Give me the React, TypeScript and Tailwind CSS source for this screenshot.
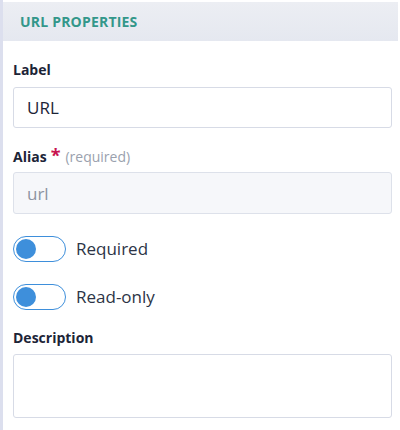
import { useState } from "react";

function Toggle({ label }: { label: string }) {
  const [on, setOn] = useState(false);
  return (
    <label className="flex h-[26px] cursor-pointer items-center gap-[10px]">
      <button
        type="button"
        onClick={() => setOn(!on)}
        className="relative h-[26px] w-[53px] rounded-full border border-[#3e8fdb] bg-white"
      >
        <span
          className={
            "absolute top-[2px] h-[20px] w-[20px] rounded-full bg-[#3e8fdb] " +
            (on ? "left-[29px]" : "left-[2px]")
          }
        />
      </button>
      <span className="text-[17px] text-[#2c3446]">{label}</span>
    </label>
  );
}

export default function App() {
  return (
    <div
      className="flex min-h-[430px] w-[400px] bg-white"
      style={{ fontFamily: '"Open Sans", "Noto Sans", sans-serif' }}
    >
      <div className="w-[3px] shrink-0 bg-[#dcdfee]" />
      <div className="flex-1 pr-[2px]">
        <div className="mt-[2px] flex h-[39px] items-center bg-gradient-to-b from-[#eceef3] to-[#e5e8f0] px-[17px]">
          <h2 className="text-[14px] font-bold uppercase tracking-[0.2px] text-[#33978a]">
            URL Properties
          </h2>
        </div>

        <div className="pl-[10px] pr-[6px] pt-[18px]">
          <div className="mb-[7px] text-[14px] font-bold text-[#1c2437]">Label</div>
          <input
            defaultValue="URL"
            className="h-[41px] w-full rounded-[3px] border border-[#d7dbe6] px-[13px] text-[17px] text-[#1c2437] outline-none"
          />

          <div className="mb-[5px] mt-[18px] flex items-baseline text-[14px]">
            <span className="font-bold text-[#1c2437]">Alias</span>
            <span className="ml-[4px] text-[18px] font-bold leading-none text-[#c8124f]">*</span>
            <span className="ml-[5px] text-[#9aa1ae]">(required)</span>
          </div>
          <input
            defaultValue="url"
            readOnly
            className="h-[42px] w-full rounded-[3px] border border-[#dde1ea] bg-[#f6f7fa] px-[13px] text-[17px] text-[#8d94a2] outline-none"
          />

          <div className="mt-[22px] flex flex-col gap-[22px]">
            <Toggle label="Required" />
            <Toggle label="Read-only" />
          </div>

          <div className="mb-[6px] mt-[17px] text-[14px] font-bold text-[#1c2437]">Description</div>
          <textarea className="block h-[64px] w-full resize-none rounded-[3px] border border-[#d7dbe6] px-[13px] py-[8px] text-[16px] outline-none" />
        </div>
      </div>
    </div>
  );
}
